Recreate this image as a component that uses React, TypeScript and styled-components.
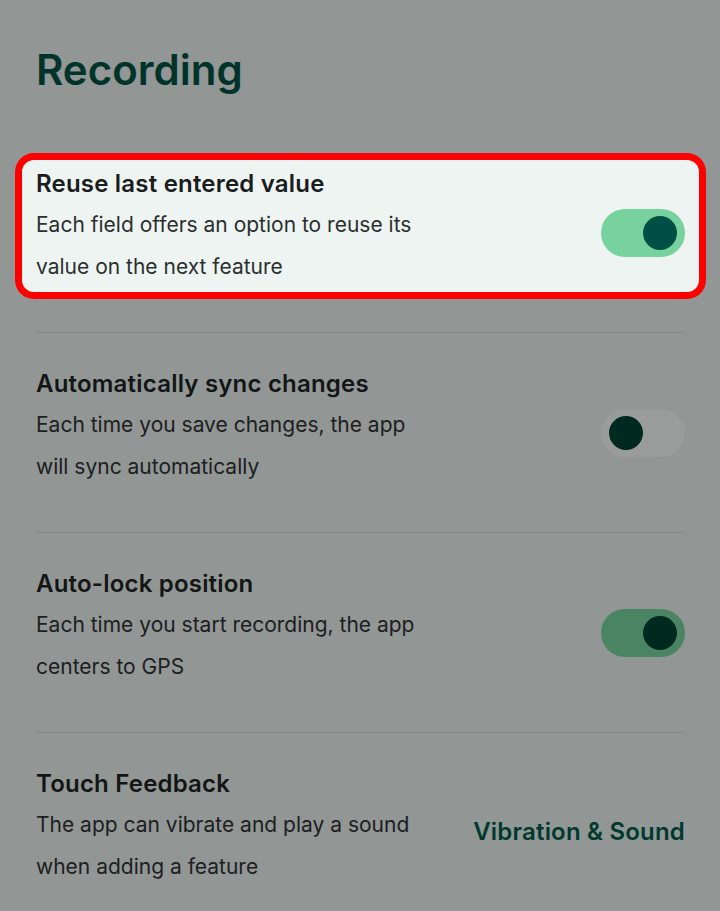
import React from "react";
import styled, { createGlobalStyle } from "styled-components";

const Global = createGlobalStyle`
  html, body { margin: 0; padding: 0; background: #929695; }
  body { font-family: Inter, "Noto Sans", sans-serif; -webkit-font-smoothing: antialiased; }
`;

const Page = styled.div`
  width: 720px;
  min-height: 911px;
  background: #929695;
  padding: 0 21px 0 22px;
  box-sizing: border-box;
  display: flex;
  flex-direction: column;
`;

const Heading = styled.h1`
  margin: 46px 0 0 14px;
  height: 72px;
  font-size: 42px;
  line-height: 48px;
  font-weight: 600;
  color: #00332a;
`;

const List = styled.div`
  display: flex;
  flex-direction: column;
  margin-top: 42px;
`;

const Row = styled.div<{ $highlight?: boolean }>`
  position: relative;
  height: 132px;
  box-sizing: border-box;
  padding: 8px 14px 0;
  display: flex;
  align-items: center;
  gap: 16px;
  border-radius: 12px;
  background: ${(p) => (p.$highlight ? "#eef4f2" : "transparent")};
  ${(p) => (p.$highlight ? "box-shadow: 0 0 0 7px #ff0000;" : "")}
`;

const Text = styled.div`
  flex: 1;
  align-self: flex-start;
  display: flex;
  flex-direction: column;
`;

const Title = styled.div<{ $highlight?: boolean }>`
  font-size: 24px;
  line-height: 32px;
  font-weight: 600;
  letter-spacing: 0.2px;
  color: ${(p) => (p.$highlight ? "#1a1c1e" : "#131615")};
`;

const Desc = styled.div<{ $highlight?: boolean }>`
  margin-top: 4px;
  font-size: 21px;
  line-height: 42px;
  font-weight: 400;
  max-width: 395px;
  color: ${(p) => (p.$highlight ? "#2b2f2e" : "#1c201f")};
`;

const Divider = styled.div`
  height: 1px;
  margin: 40px 14px 27px;
  background: #848887;
`;

type Tone = "bright" | "off" | "on";

const Track = styled.div<{ $tone: Tone }>`
  width: 84px;
  height: 48px;
  border-radius: 24px;
  box-sizing: border-box;
  padding: 0 8px;
  display: flex;
  align-items: center;
  justify-content: ${(p) => (p.$tone === "off" ? "flex-start" : "flex-end")};
  background: ${(p) =>
    p.$tone === "bright" ? "#77d29e" : p.$tone === "on" ? "#4a8462" : "#9a9c9b"};
  flex-shrink: 0;
  margin-top: 6px;
`;

const Knob = styled.div<{ $tone: Tone }>`
  width: 34px;
  height: 34px;
  border-radius: 50%;
  background: ${(p) => (p.$tone === "bright" ? "#004f45" : "#00291f")};
`;

const Action = styled.div`
  font-size: 24px;
  font-weight: 600;
  letter-spacing: 0.2px;
  color: #003a2f;
  margin-top: 2px;
  white-space: nowrap;
`;

const items: {
  title: string;
  desc: string;
  tone?: Tone;
  action?: string;
  highlight?: boolean;
}[] = [
  {
    title: "Reuse last entered value",
    desc: "Each field offers an option to reuse its value on the next feature",
    tone: "bright",
    highlight: true,
  },
  {
    title: "Automatically sync changes",
    desc: "Each time you save changes, the app will sync automatically",
    tone: "off",
  },
  {
    title: "Auto-lock position",
    desc: "Each time you start recording, the app centers to GPS",
    tone: "on",
  },
  {
    title: "Touch Feedback",
    desc: "The app can vibrate and play a sound when adding a feature",
    action: "Vibration & Sound",
  },
];

export default function App() {
  return (
    <>
      <Global />
      <Page>
        <Heading>Recording</Heading>
        <List>
          {items.map((it, i) => (
            <React.Fragment key={it.title}>
              {i > 0 && <Divider />}
              <Row $highlight={it.highlight}>
                <Text>
                  <Title $highlight={it.highlight}>{it.title}</Title>
                  <Desc $highlight={it.highlight}>{it.desc}</Desc>
                </Text>
                {it.tone && (
                  <Track $tone={it.tone}>
                    <Knob $tone={it.tone} />
                  </Track>
                )}
                {it.action && <Action>{it.action}</Action>}
              </Row>
            </React.Fragment>
          ))}
        </List>
      </Page>
    </>
  );
}
